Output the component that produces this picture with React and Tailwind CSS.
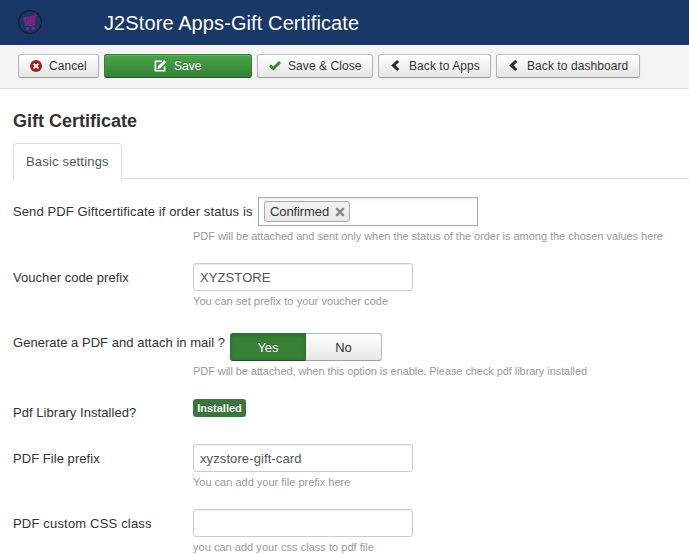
import React from "react";

const toolButton =
  "flex h-6 shrink-0 items-center whitespace-nowrap rounded-[3px] border border-[#b3b3b3] border-t-[#c0c0c0] border-b-[#9f9f9f] bg-linear-to-b from-white to-[#e6e6e6] text-[12px] leading-none tracking-[0.07px] text-[#333] shadow-[0_1px_2px_rgba(0,0,0,0.05)]";
const inputBox =
  "h-7 w-[220px] rounded-[3px] border border-[#ccc] bg-white px-1.5 text-[13px] leading-[18px] tracking-[0.1px] text-[#555] shadow-[inset_0_1px_1px_rgba(0,0,0,0.075)] outline-none";

function CartLogo() {
  return (
    <svg width="25" height="25" viewBox="0 0 25 25">
      <circle cx="12" cy="12" r="11.4" fill="none" stroke="#18202e" strokeWidth="1.3" />
      <path d="M5.1 7.6 16 6l.6-1.3h2.6v1.1h-1.6L16.5 16H7.4z" fill="#8a1f80" />
      <path d="M8.6 7.2l.6 8.6M11.4 6.8v9M14.2 6.4l-.4 9.4M5.8 10l10.8-1M6.6 12.8l9.8-.5" stroke="#5b2876" strokeWidth=".5" />
      <rect x="7.8" y="17" width="3.2" height="3.2" rx=".9" fill="#8a1f80" />
      <rect x="13.6" y="17" width="3.2" height="3.2" rx=".9" fill="#8a1f80" />
    </svg>
  );
}

function CancelIcon() {
  return (
    <svg width="12" height="12" viewBox="0 0 12 12">
      <circle cx="6" cy="6" r="6" fill="#9b2521" />
      <path d="m3.6 3.6 4.8 4.8M8.4 3.6 3.6 8.4" stroke="#fff" strokeWidth="1.9" />
    </svg>
  );
}

function EditIcon() {
  return (
    <svg width="13" height="12" viewBox="0 0 13 12">
      <path d="M8 1.2H1.4v9.6h9.2V6.6" fill="none" stroke="#fff" strokeWidth="1.6" />
      <path d="m3.4 8.9.7-3L10.2.2l2.1 2-6 6z" fill="#fff" />
    </svg>
  );
}

function CheckIcon() {
  return (
    <svg width="12" height="10" viewBox="0 0 12 10">
      <path d="m1 4.6 3.4 2.9L11 1" fill="none" stroke="#378137" strokeWidth="2.8" />
    </svg>
  );
}

function BackIcon() {
  return (
    <svg width="9" height="12" viewBox="0 0 9 12">
      <path d="M7.2 1 2.4 5.4l4.8 4.6" fill="none" stroke="#2b2b2b" strokeWidth="3" />
    </svg>
  );
}

function Label({ children, className = "" }) {
  return <label className={`shrink-0 whitespace-nowrap text-[13px] leading-[18px] text-[#333] ${className}`}>{children}</label>;
}

function Help({ children, className = "" }) {
  return <p className={`ml-[180px] whitespace-nowrap pt-[3px] text-[11px] leading-[14px] text-[#999] ${className}`}>{children}</p>;
}

function TextRow({ label, value, help, className, labelClass, helpClass }) {
  return (
    <div className={className}>
      <div className="flex">
        <Label className={`w-[180px] pt-1.5 ${labelClass}`}>{label}</Label>
        <input className={inputBox} defaultValue={value} />
      </div>
      <Help className={helpClass}>{help}</Help>
    </div>
  );
}

export default function App() {
  return (
    <div className="h-[554px] w-[689px] overflow-hidden bg-white font-['Liberation_Sans',Arial,sans-serif] text-[#333]">
      <header className="flex h-[45px] items-center bg-[#1a3867] pl-[18px]">
        <CartLogo />
        <h1 className="ml-[61px] whitespace-nowrap text-[20px] leading-none tracking-[0.1px] text-white">J2Store Apps-Gift Certificate</h1>
      </header>

      <div className="flex h-11 items-start gap-[5px] border-b border-[#dedede] bg-[#f4f4f4] pt-[9px] pl-[18px]">
        <button className={`${toolButton} w-[81px] gap-[7px] pl-[11px]`}>
          <CancelIcon />
          Cancel
        </button>
        <button className="flex h-6 w-[148px] items-center gap-[7px] rounded-[3px] border border-[#378137] border-b-[#245524] bg-linear-to-b from-[#46a546] to-[#378137] pl-[49px] text-[12px] leading-none text-white shadow-[inset_0_1px_0_rgba(255,255,255,0.15)] [text-shadow:0_-1px_0_rgba(0,0,0,0.25)]">
          <EditIcon />
          Save
        </button>
        <button className={`${toolButton} w-[116px] gap-[7px] pl-[11px]`}>
          <CheckIcon />
          Save &amp; Close
        </button>
        <button className={`${toolButton} w-[113px] gap-[9px] pl-3`}>
          <BackIcon />
          Back to Apps
        </button>
        <button className={`${toolButton} w-36 gap-[9px] pl-3`}>
          <BackIcon />
          Back to dashboard
        </button>
      </div>

      <main className="pl-[13px]">
        <h2 className="h-[54px] pt-[22px] text-[18px] leading-5 font-bold">Gift Certificate</h2>
        <div className="flex h-9 items-end">
          <div className="h-9 w-[109px] rounded-t-[4px] border border-b-0 border-[#ddd] pt-[9px] pl-3 text-[13px] leading-[18px] tracking-[0.18px] whitespace-nowrap text-[#555]">
            Basic settings
          </div>
          <div className="h-px flex-1 bg-[#ddd]" />
        </div>

        <form className="pt-[18px]">
          <div className="h-[66px]">
            <div className="flex">
              <Label className="w-[245px] pt-1.5 tracking-[0.11px]">Send PDF Giftcertificate if order status is</Label>
              <div className="h-[29px] w-[220px] border border-[#aaa] bg-[linear-gradient(#eee_1%,#fff_15%)] pt-[3px] pl-[5px]">
                <div className="flex h-[21px] w-[86px] items-center rounded-[3px] border border-[#aaa] bg-linear-to-b from-[#f4f4f4] to-[#e8e8e8] pl-[5px] text-[13px] leading-none tracking-[-0.1px] text-[#333]">
                  Confirmed
                  <svg className="ml-[6px] shrink-0" width="10" height="10" viewBox="0 0 10 10">
                    <path d="m1.2 1.2 7.6 7.6M8.8 1.2 1.2 8.8" stroke="#888" strokeWidth="2.4" />
                  </svg>
                </div>
              </div>
            </div>
            <Help className="tracking-[-0.035px]">PDF will be attached and sent only when the status of the order is among the chosen values here</Help>
          </div>

          <TextRow
            className="h-[70px]"
            label="Voucher code prefix"
            labelClass="tracking-[0.05px]"
            value="XYZSTORE"
            help="You can set prefix to your voucher code"
            helpClass="tracking-[0.06px]"
          />

          <div className="h-[66px]">
            <div className="flex">
              <Label className="w-[217px] pt-px tracking-[0.03px]">Generate a PDF and attach in mail ?</Label>
              <div className="flex text-[13px] leading-[18px]">
                <div className="flex h-7 w-[76px] items-center justify-center rounded-l-[3px] border border-[#2d6d2d] border-b-[#1f4f1f] bg-[#378137] pt-0.5 text-white shadow-[inset_0_2px_4px_rgba(0,0,0,0.15)] [text-shadow:0_-1px_0_rgba(0,0,0,0.25)]">
                  Yes
                </div>
                <div className="flex h-7 w-[76px] items-center justify-center rounded-r-[3px] border border-l-0 border-[#bbb] border-b-[#a2a2a2] bg-linear-to-b from-white to-[#e6e6e6] pt-0.5">
                  No
                </div>
              </div>
            </div>
            <Help className="tracking-[-0.07px]">PDF will be attached, when this option is enable. Please check pdf library installed</Help>
          </div>

          <div className="flex h-[45px] items-start">
            <Label className="w-[180px] pt-[5px] tracking-[0.05px]">Pdf Library Installed?</Label>
            <span className="flex h-[18px] w-[53px] items-center justify-center rounded-[3px] bg-[#3c763d] text-[11px] leading-none font-bold text-white [text-shadow:0_-1px_0_rgba(0,0,0,0.25)]">
              Installed
            </span>
          </div>

          <TextRow
            className="h-[65px]"
            label="PDF File prefix"
            labelClass="tracking-[0.05px]"
            value="xyzstore-gift-card"
            help="You can add your file prefix here"
            helpClass="tracking-normal"
          />
          <TextRow
            className="h-[45px]"
            label="PDF custom CSS class"
            labelClass="tracking-[0.18px]"
            value=""
            help="you can add your css class to pdf file"
            helpClass="tracking-[0.03px]"
          />
        </form>
      </main>
    </div>
  );
}
